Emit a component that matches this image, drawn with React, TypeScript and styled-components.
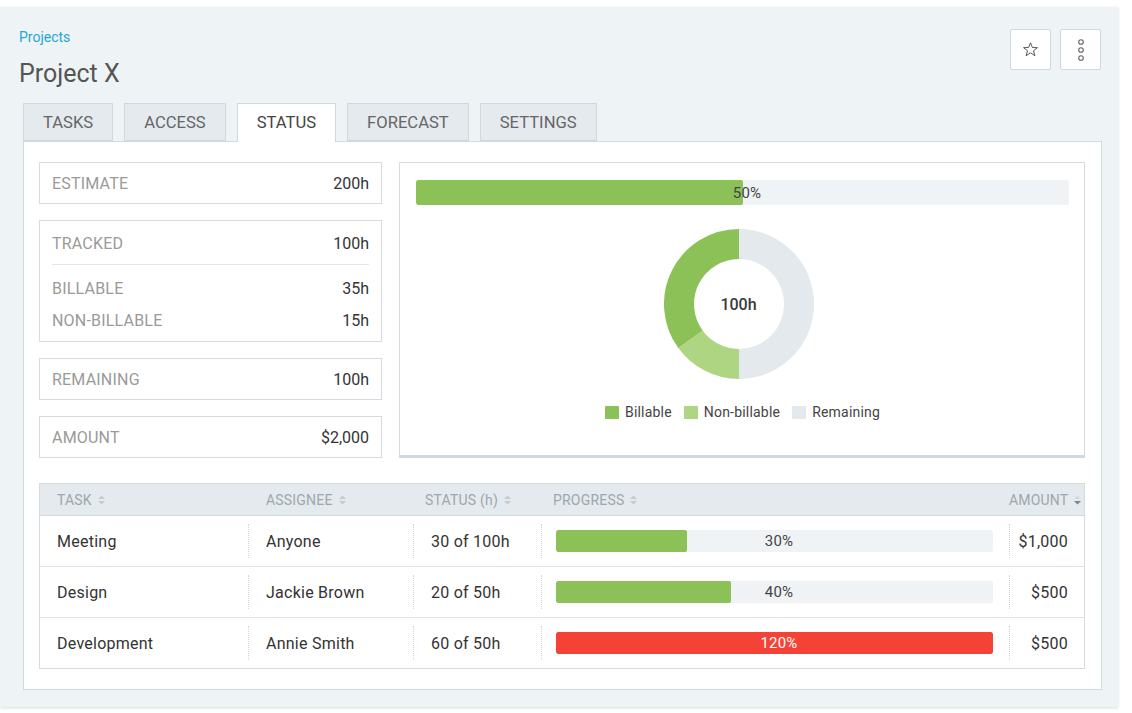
import React from "react";
import styled, { createGlobalStyle } from "styled-components";

const GlobalStyle = createGlobalStyle`
  html, body {
    margin: 0;
    padding: 0;
    background: #fff;
  }
  body {
    font-family: Roboto, "Liberation Sans", Arial, sans-serif;
    color: #333;
  }
  * {
    box-sizing: border-box;
  }
`;

const Page = styled.div`
  width: 1132px;
  height: 713px;
  padding-top: 7px;
  background: #fff;
`;

const Panel = styled.div`
  width: 1118px;
  height: 700px;
  background: #eef3f6;
  padding: 22px 16px 18px 19px;
  box-shadow: 0 1px 3px rgba(0, 0, 0, 0.14);
  display: flex;
  flex-direction: column;
`;

const Header = styled.div`
  display: flex;
  justify-content: space-between;
  align-items: flex-start;
`;

const Breadcrumb = styled.a`
  display: block;
  font-size: 14px;
  line-height: 16px;
  color: #26a7d0;
  text-decoration: none;
`;

const Title = styled.h1`
  margin: 14px 0 0;
  font-size: 25px;
  line-height: 30px;
  font-weight: 400;
  color: #555;
`;

const Actions = styled.div`
  display: flex;
  gap: 9px;
  margin-right: 1px;
`;

const IconButton = styled.button`
  width: 41px;
  height: 41px;
  padding: 0;
  background: #fff;
  border: 1px solid #cfd8dc;
  border-radius: 2px;
  display: flex;
  align-items: center;
  justify-content: center;
  color: #555;
`;

const Tabs = styled.div`
  display: flex;
  gap: 11px;
  margin: 14px 0 0 4px;
`;

const Tab = styled.div<{ $active?: boolean }>`
  height: ${(p) => (p.$active ? 39 : 38)}px;
  margin-bottom: ${(p) => (p.$active ? -1 : 0)}px;
  position: relative;
  z-index: ${(p) => (p.$active ? 1 : 0)};
  padding: 0 19px;
  font-size: 16.6px;
  line-height: 38px;
  color: ${(p) => (p.$active ? "#444" : "#666")};
  background: ${(p) => (p.$active ? "#fff" : "#e4eaee")};
  border: 1px solid #cfd8dc;
  border-bottom: ${(p) => (p.$active ? "none" : "1px solid #cfd8dc")};
`;

const Card = styled.div`
  flex: 1;
  margin-left: 4px;
  background: #fff;
  border: 1px solid #d3dade;
  padding: 20px 16px 20px 15px;
  display: flex;
  flex-direction: column;
`;

const TopSection = styled.div`
  display: grid;
  grid-template-columns: 343px 1fr;
  gap: 17px;
`;

const StatStack = styled.div`
  display: flex;
  flex-direction: column;
  gap: 16px;
`;

const StatCard = styled.div`
  border: 1px solid #d5dbe0;
  padding: 0 12px;
`;

const StatRow = styled.div<{ $h: number }>`
  height: ${(p) => p.$h}px;
  padding-top: 1px;
  display: flex;
  align-items: center;
  justify-content: space-between;
`;

const StatLabel = styled.span`
  font-size: 16px;
  letter-spacing: 0.2px;
  color: #9a9a9a;
`;

const StatValue = styled.span`
  font-size: 16px;
  color: #333;
`;

const StatDivider = styled.div`
  height: 1px;
  background: #e3e7ea;
  margin-bottom: 7px;
`;

const StatSub = styled.div`
  padding-bottom: 5px;
`;

const ChartCard = styled.div`
  border: 1px solid #d5dbe0;
  border-bottom: 3px solid #cfd8dc;
  padding: 17px 15px 0 16px;
  display: flex;
  flex-direction: column;
  align-items: center;
`;

const Bar = styled.div<{ $h: number }>`
  position: relative;
  align-self: stretch;
  height: ${(p) => p.$h}px;
  background: #f0f3f6;
  border-radius: 2px;
  overflow: hidden;
`;

const TableBar = styled(Bar)`
  flex: 1;
  align-self: center;
`;

const BarFill = styled.div<{ $color: string }>`
  height: 100%;
  background: ${(p) => p.$color};
  border-radius: 2px;
`;

const BarLabel = styled.span<{ $light?: boolean }>`
  position: absolute;
  inset: 0;
  padding-left: 9px;
  display: flex;
  align-items: center;
  justify-content: center;
  font-size: 15px;
  letter-spacing: 0.2px;
  color: ${(p) => (p.$light ? "#fff" : "#444")};
`;

const DonutWrap = styled.div`
  position: relative;
  width: 150px;
  height: 150px;
  margin: 24px 8px 0 0;
`;

const DonutCenter = styled.span`
  position: absolute;
  inset: 0;
  display: flex;
  align-items: center;
  justify-content: center;
  font-size: 16px;
  font-weight: 500;
  color: #2a2a2a;
  opacity: 0.92;
`;

const Legend = styled.div`
  display: flex;
  gap: 12px;
  margin-top: 25px;
`;

const LegendItem = styled.div`
  display: flex;
  align-items: center;
  gap: 6px;
  font-size: 14px;
  letter-spacing: 0.2px;
  color: #444;
`;

const Swatch = styled.span<{ $color: string }>`
  width: 14px;
  height: 13px;
  border-radius: 1px;
  background: ${(p) => p.$color};
`;

const Table = styled.div`
  margin-top: 25px;
  border: 1px solid #d5dbe0;
`;

const COLS = "208px 165px 128px 468px 1fr";

const HeadRow = styled.div`
  display: grid;
  grid-template-columns: ${COLS};
  height: 32px;
  background: #e4eaee;
  border-bottom: 1px solid #cfd8dc;
`;

const HeadCell = styled.div<{ $pad: number; $right?: boolean }>`
  display: flex;
  align-items: center;
  justify-content: ${(p) => (p.$right ? "flex-end" : "flex-start")};
  padding: ${(p) => (p.$right ? `0 16px 0 0` : `0 0 0 ${p.$pad}px`)};
  font-size: 14px;
  letter-spacing: 0.2px;
  color: #9ea7ad;
`;

const SortIcon = styled.svg`
  margin-left: 6px;
`;

const Row = styled.div`
  display: grid;
  grid-template-columns: ${COLS};
  height: 51px;
  border-bottom: 1px solid #dde3e7;
  &:last-child {
    height: 50px;
    border-bottom: none;
  }
`;

const Cell = styled.div<{ $pad: number; $padR?: number; $divider?: boolean; $right?: boolean }>`
  display: flex;
  align-items: center;
  justify-content: ${(p) => (p.$right ? "flex-end" : "flex-start")};
  margin: 8px 0;
  padding: 0 ${(p) => p.$padR ?? 0}px 0 ${(p) => p.$pad}px;
  border-left: ${(p) => (p.$divider ? "1px dotted #d2d6d9" : "none")};
  font-size: 16px;
  letter-spacing: 0.25px;
  color: #333;
`;

const Sort = ({ active }: { active?: boolean }) => (
  <SortIcon width="7" height="10" viewBox="0 0 7 10">
    <polygon points="0,4 3.5,0.5 7,4" fill={active ? "#d4d9dd" : "#c4cbd0"} />
    <polygon points="0,6 3.5,9.5 7,6" fill={active ? "#7d858a" : "#c4cbd0"} />
  </SortIcon>
);

const StarIcon = () => (
  <svg width="17" height="17" viewBox="0 0 24 24" fill="none" stroke="#555" strokeWidth="1.4" strokeLinejoin="miter">
    <polygon points="12,2.5 14.7,9.2 21.8,9.4 16.2,13.8 18.2,20.8 12,16.7 5.8,20.8 7.8,13.8 2.2,9.4 9.3,9.2" />
  </svg>
);

const DotsIcon = () => (
  <svg width="8" height="22" viewBox="0 0 8 22" fill="none" stroke="#666" strokeWidth="1.1">
    <circle cx="4" cy="3" r="2.3" />
    <circle cx="4" cy="11" r="2.3" />
    <circle cx="4" cy="19" r="2.3" />
  </svg>
);

const arc = (from: number, to: number, rO: number, rI: number, c: number) => {
  const pt = (f: number, r: number) => {
    const a = f * Math.PI * 2 - Math.PI / 2;
    return `${c + r * Math.cos(a)},${c + r * Math.sin(a)}`;
  };
  const large = to - from > 0.5 ? 1 : 0;
  return `M${pt(from, rO)} A${rO},${rO} 0 ${large} 1 ${pt(to, rO)} L${pt(to, rI)} A${rI},${rI} 0 ${large} 0 ${pt(from, rI)} Z`;
};

const slices = [
  { from: 0, to: 0.5, color: "#e4e9ed" },
  { from: 0.5, to: 0.65, color: "#aed581" },
  { from: 0.65, to: 1, color: "#8bc157" },
];

const Donut = () => (
  <DonutWrap>
    <svg width="150" height="150" viewBox="0 0 150 150">
      {slices.map((s) => (
        <path key={s.from} d={arc(s.from, s.to, 75, 45, 75)} fill={s.color} />
      ))}
    </svg>
    <DonutCenter>100h</DonutCenter>
  </DonutWrap>
);

const tasks = [
  { task: "Meeting", who: "Anyone", status: "30 of 100h", pct: 30, amount: "$1,000" },
  { task: "Design", who: "Jackie Brown", status: "20 of 50h", pct: 40, amount: "$500" },
  { task: "Development", who: "Annie Smith", status: "60 of 50h", pct: 120, amount: "$500" },
];

export default function App() {
  return (
    <Page>
      <GlobalStyle />
      <Panel>
        <Header>
          <div>
            <Breadcrumb href="#">Projects</Breadcrumb>
            <Title>Project X</Title>
          </div>
          <Actions>
            <IconButton>
              <StarIcon />
            </IconButton>
            <IconButton>
              <DotsIcon />
            </IconButton>
          </Actions>
        </Header>

        <Tabs>
          <Tab>TASKS</Tab>
          <Tab>ACCESS</Tab>
          <Tab $active>STATUS</Tab>
          <Tab>FORECAST</Tab>
          <Tab>SETTINGS</Tab>
        </Tabs>

        <Card>
          <TopSection>
            <StatStack>
              <StatCard>
                <StatRow $h={40}>
                  <StatLabel>ESTIMATE</StatLabel>
                  <StatValue>200h</StatValue>
                </StatRow>
              </StatCard>
              <StatCard>
                <StatRow $h={43}>
                  <StatLabel>TRACKED</StatLabel>
                  <StatValue>100h</StatValue>
                </StatRow>
                <StatDivider />
                <StatSub>
                  <StatRow $h={32}>
                    <StatLabel>BILLABLE</StatLabel>
                    <StatValue>35h</StatValue>
                  </StatRow>
                  <StatRow $h={32}>
                    <StatLabel>NON-BILLABLE</StatLabel>
                    <StatValue>15h</StatValue>
                  </StatRow>
                </StatSub>
              </StatCard>
              <StatCard>
                <StatRow $h={40}>
                  <StatLabel>REMAINING</StatLabel>
                  <StatValue>100h</StatValue>
                </StatRow>
              </StatCard>
              <StatCard>
                <StatRow $h={40}>
                  <StatLabel>AMOUNT</StatLabel>
                  <StatValue>$2,000</StatValue>
                </StatRow>
              </StatCard>
            </StatStack>

            <ChartCard>
              <Bar $h={25}>
                <BarFill $color="#8bc157" style={{ width: "50%" }} />
                <BarLabel>50%</BarLabel>
              </Bar>
              <Donut />
              <Legend>
                <LegendItem>
                  <Swatch $color="#8bc157" />
                  Billable
                </LegendItem>
                <LegendItem>
                  <Swatch $color="#aed581" />
                  Non-billable
                </LegendItem>
                <LegendItem>
                  <Swatch $color="#e4e9ed" />
                  Remaining
                </LegendItem>
              </Legend>
            </ChartCard>
          </TopSection>

          <Table>
            <HeadRow>
              <HeadCell $pad={17}>
                TASK <Sort />
              </HeadCell>
              <HeadCell $pad={18}>
                ASSIGNEE <Sort />
              </HeadCell>
              <HeadCell $pad={12}>
                STATUS (h) <Sort />
              </HeadCell>
              <HeadCell $pad={12}>
                PROGRESS <Sort />
              </HeadCell>
              <HeadCell $pad={0} $right>
                AMOUNT <Sort active />
              </HeadCell>
            </HeadRow>
            {tasks.map((t) => {
              const over = t.pct > 100;
              return (
                <Row key={t.task}>
                  <Cell $pad={17}>{t.task}</Cell>
                  <Cell $pad={17} $divider>
                    {t.who}
                  </Cell>
                  <Cell $pad={17} $divider>
                    {t.status}
                  </Cell>
                  <Cell $pad={14} $padR={16} $divider>
                    <TableBar $h={22}>
                      <BarFill
                        $color={over ? "#f44336" : "#8bc157"}
                        style={{ width: `${Math.min(t.pct, 100)}%` }}
                      />
                      <BarLabel $light={over}>{t.pct}%</BarLabel>
                    </TableBar>
                  </Cell>
                  <Cell $pad={0} $padR={16} $divider $right>
                    {t.amount}
                  </Cell>
                </Row>
              );
            })}
          </Table>
        </Card>
      </Panel>
    </Page>
  );
}
